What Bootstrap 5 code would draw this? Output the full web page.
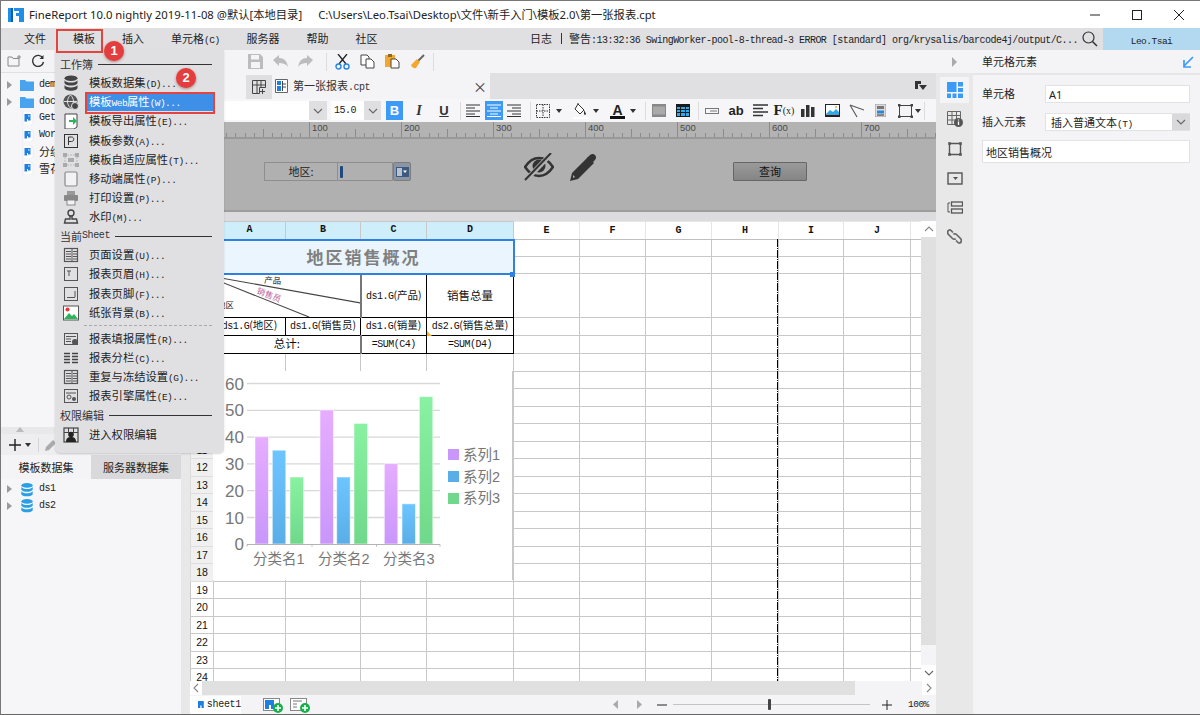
<!DOCTYPE html>
<html lang="zh-CN">
<head>
<meta charset="utf-8">
<title>FineReport</title>
<link href="https://cdn.jsdelivr.net/npm/bootstrap@5.3.0/dist/css/bootstrap.min.css" rel="stylesheet">
<style>
html,body{margin:0;height:715px;overflow:hidden;background:#f4f4f6}
body{font-family:"Noto Sans CJK SC","Noto Sans",sans-serif;font-size:11px;color:#222;line-height:1.2}
.asc{font-family:"Liberation Mono","Noto Sans CJK SC",monospace;font-size:9.5px;letter-spacing:-.5px}
.appwin{position:relative;width:1200px;height:715px;border-top:1px solid #777;border-left:1px solid #777;border-bottom:1px solid #666;background:#f4f4f6;overflow:hidden}
.titlebar{height:27px;background:#fff;flex:none}
.titlebar .apptitle{font-family:"Noto Sans","Noto Sans CJK SC",sans-serif;font-size:11.3px;color:#222;white-space:nowrap}
.logo{margin:0 5px 0 7px}
.winbtns{margin-left:auto}
.winbtn{width:42px;height:27px;display:flex;align-items:center;justify-content:center}
.menubar{height:22px;background:#e0e0e3;flex:none}
.menuitems{padding-left:9.5px}
.menuitem{padding:0 13.5px;font-size:11px;color:#222;white-space:nowrap;line-height:24px}
.logline{margin-left:auto;white-space:nowrap;line-height:24px;color:#222}
.logline .asc{font-size:10px;letter-spacing:-.53px}
.logsep{display:inline-block;width:1px;height:11px;background:#333;margin:0 7px 0 9px;vertical-align:-1px}
.usertag{width:97px;height:22px;background:#b3d9f0;margin-left:5px;text-align:center;line-height:22px}
.usertag .asc{font-size:9.5px}
.mainrow{flex:1 1 0;min-height:0}
.leftpane{width:180px;flex:none;background:#f6f6f8}
.tb-left{height:23px;border-bottom:1px solid #e0e0e3;flex:none;padding-left:6px;background:#f4f4f6}
.tb-left svg{margin-right:8px}
.treelist{padding-top:5px}
.treelist.filetree{flex:1 1 0;min-height:0;overflow:hidden;padding-top:4px}
.treelist.dstree{flex:none;height:235px;padding-top:2px}
.treerow{height:16.6px;white-space:nowrap;line-height:16.6px;padding-left:6px}
.treerow .arrow{width:0;height:0;border-left:5px solid #9a9a9a;border-top:4px solid transparent;border-bottom:4px solid transparent;margin-right:8px;flex:none}
.treerow .noarrow{width:15px;flex:none}
.treerow svg{flex:none;margin-right:5px}
.treerow .asc{font-size:10px}
.stripbar{height:7px;background:#e8e8ea;flex:none;position:relative}
.stripbar i{position:absolute;left:15px;top:0;border-left:4px solid transparent;border-right:4px solid transparent;border-bottom:5px solid #bbb}
.tb-add{height:21px;flex:none;background:#eeeef0;padding-left:8px}
.tb-add .vsep{height:14px;margin:0 6px 0 7px;background:#d4d4d6}
.dstabs{height:24px;flex:none}
.dstab{width:90px;text-align:center;line-height:24px;font-size:11px;background:#f4f4f6}
.dstab.off{background:#d9d9dc}
.midgap{width:9px;flex:none;background:#e8e8e8}
.centerpane{width:746px;flex:none;min-width:0}
.tb1{height:23px;flex:none;background:#f4f4f6;padding-left:53px}
.ic25{width:25px;height:23px;display:flex;align-items:center;justify-content:center;flex:none}
.vsep{width:1px;height:18px;background:#dcdcdf;flex:none}
.tabrow{height:26px;flex:none;background:#f4f4f6;padding-left:56px}
.plusbtn{width:26px;height:24px;background:#dfdfe2;display:flex;align-items:center;justify-content:center;flex:none;align-self:flex-end}
.sheetname{width:218px;display:flex;align-items:center;padding-left:3px;flex:none;background:#f4f4f6;white-space:nowrap}
.sheetname .nm{margin-left:5px;font-size:11px;color:#333}
.sheetname .asc{font-size:10px}
.sheetname .xx{margin-left:auto;margin-right:3px;font-size:14px;color:#444;line-height:1}
.tabfill{flex:1 1 0;background:#e0e0e3;display:flex;align-items:center;justify-content:flex-end;padding-right:9px}
.fmtbar{height:23px;flex:none;background:#f6f6f8}
.fmtbar .fx{height:19px;display:flex;align-items:center;justify-content:center;flex:none}
.fontbox{width:137px;background:#fff;justify-content:flex-end!important}
.chev{background:#dfdfe2;height:19px;display:flex;align-items:center;justify-content:center;flex:none}
.w18{width:18px}.w17{width:17px}.w16{width:16px}.w24{width:24px}.w6{width:7px}
.sizebox{width:33px;background:#fff;margin-left:4px;justify-content:flex-start!important;padding-left:3px}
.sizebox .asc{font-size:10px}
.fmtbtn-on{background:#3e9af7;color:#fff}
.boldb{font:700 13px "Liberation Sans",sans-serif}
.italici{font:italic 700 14px "Liberation Serif",serif;color:#333}
.underu{font:700 13px "Liberation Sans",sans-serif;text-decoration:underline;color:#333}
.abtxt{font:700 13px "Liberation Sans",sans-serif;color:#222}
.fxfont{font:700 15px "Liberation Serif",serif;color:#222}
.fxfont small{font-size:10px;font-weight:400}
.ml1{margin-left:1px}.ml3{margin-left:3px}.ml4{margin-left:4px}.ml5{margin-left:5px}.ml8{margin-left:8px}.ml9{margin-left:9px}.ml10{margin-left:10px}.ml11{margin-left:11px}
.caret{width:0;height:0;border-left:3.5px solid transparent;border-right:3.5px solid transparent;border-top:4px solid #333;display:block}
.rulerbar{height:17px;flex:none;background:#b3b3b3;padding-left:27px;border-bottom:2px solid #999;overflow:hidden}
.rulerseg{width:92px;flex:none;height:15px;position:relative;font-family:"Liberation Sans",sans-serif;font-size:9.5px;color:#4a4a4a;padding-left:3px;line-height:11px;background-image:linear-gradient(#8b8b8b,#8b8b8b),repeating-linear-gradient(90deg,#8b8b8b 0 1px,transparent 1px 9.2px),linear-gradient(#8b8b8b,#8b8b8b);background-size:1px 15px,100% 4px,1px 8px;background-position:0 0,0 100%,46px 100%;background-repeat:no-repeat}
.parampane{height:73px;flex:none;background:#b0b0b0;border-bottom:2px solid #9d9d9d;padding-left:74px;position:relative}
.pwidgets{height:19px;margin-top:23px}
.plabel{width:74px;height:19px;border:1px solid #8e8e8e;text-align:center;line-height:17px;font-size:11px;color:#222;flex:none}
.pinput{width:55px;height:19px;border:1px solid #8e8e8e;border-left:0;flex:none;padding:3px 0 0 2px}
.pinput i{display:block;width:3px;height:12px;background:#1f4a80;border-radius:1px}
.pdrop{width:18px;height:19px;border:1px solid #7d7d7d;border-radius:2px;background:#8b95a3;flex:none;display:flex;align-items:center;justify-content:center}
.pbtn.btn{width:74px;height:19px;padding:0;border:1px solid #666;border-radius:1px;background:linear-gradient(#9a9a9a,#858585);color:#111;font-size:11px;line-height:17px;margin-left:135px;flex:none}
.p-eye{margin-left:113px;margin-top:-9px;flex:none}
.p-pen{margin-left:16px;margin-top:-9px;flex:none}
.graygap{height:9px;flex:none;background:#dcdcde}
.gridrow{height:460px;flex:none}
.gridclip{width:731px;height:460px;overflow:hidden;position:relative;flex:none;background:#fff}
.sheet-grid.table{table-layout:fixed;width:731px;margin:0;border-collapse:collapse;--bs-table-bg:#fff;--bs-border-color:#c8c8c8;font-family:"Liberation Mono","Noto Sans CJK SC",monospace}
.sheet-grid.table>:not(caption)>*>*{padding:0;border:1px solid #c8c8c8;text-align:center;vertical-align:middle;font-size:10.5px;color:#111;line-height:1;font-weight:400;overflow:hidden;white-space:nowrap;background:#fff;box-shadow:none}
.sheet-grid tr{height:17.5px}
.sheet-grid tr.rh18{height:18px}
.sheet-grid tr.rh17{height:17px}
.sheet-grid tr.rh44{height:43px}
.sheet-grid.table>:not(caption)>*>th{font-size:10px;font-weight:700}
.sheet-grid.table>:not(caption)>*>th.rn{font-weight:400;font-family:"Liberation Sans",sans-serif;font-size:10.5px}
.sheet-grid.table>:not(caption)>*>th.sel{background:#cdeefa;border-bottom-color:#2f80e0}
.sheet-grid.table>:not(caption)>*>th.rnbg{background:#f0f0f0;border-color:#ddd}
.sheet-grid.table>:not(caption)>*>th.hd{border-color:#e6e6e6;border-bottom-color:#c0c0c0}
.sheet-grid.table>:not(caption)>*>td.blk{border-color:#000}
.sheet-grid.table>:not(caption)>*>td.blkl{border-left:2px solid #777}
.sheet-grid.table>:not(caption)>*>td.ttl{border:2px solid #2f80e0;background:#eaf5fd;color:#808080;font-family:"Noto Sans CJK SC",sans-serif;font-weight:700;font-size:17px;letter-spacing:2px;position:relative}
.sheet-grid.table>:not(caption)>*>td.big{font-family:"Noto Sans CJK SC",sans-serif;font-size:11.5px}
.cn11{font-size:10.5px;font-family:"Noto Sans CJK SC",sans-serif}
.sheet-grid .asc{font-size:10px}
.diagsvg{display:block;width:147px;height:42px}
.handle{position:absolute;left:320px;top:51px;width:5px;height:5px;background:#2f80e0}
.yellowtri{position:absolute;left:237px;top:110px;width:0;height:0;border-left:5px solid #f0b030;border-top:5px solid transparent}
.pagebreak{position:absolute;left:587px;top:18px;bottom:0;width:1px;background:repeating-linear-gradient(#000 0 8px,transparent 8px 9px,#000 9px 10px,transparent 10px 11px)}
.chartbox{position:absolute;left:23px;top:150px;width:300px;height:209px;background:#fff;border-right:1px solid #c8c8c8}
.chartbox svg{display:block}
.chartbox text{font-family:"Liberation Sans","Noto Sans CJK SC",sans-serif;fill:#777}
.vscroll{width:15px;flex:none;background:#f4f4f6}
.vs-arrow{height:16px;background:#fff;display:flex;align-items:center;justify-content:center;flex:none}
.vs-thumb{height:408px;background:#e0e0e0;flex:none}
.hscroll{height:14px;flex:none;background:#f4f4f6}
.hs-left{width:12px;background:#fff;display:flex;align-items:center;justify-content:center;flex:none}
.hs-thumb{width:653px;background:#e0e0e0;flex:none}
.hs-right{width:14px;background:#fff;display:flex;align-items:center;justify-content:center;margin-left:auto;flex:none}
.statusbar{flex:1 1 0;background:#f4f4f6;min-height:0}
.sheettab{width:51px;height:18px;background:#fff;padding-left:8px;flex:none}
.sheettab .asc{font-size:10px;margin-left:3px;letter-spacing:-.3px}
.sb-ic{flex:none}
.statusic1{margin-left:22px}
.statusic2{margin-left:7px}
.sb-arrows{margin-left:303px;flex:none}
.sb-arrow2{margin-left:17px}
.sb-minus{margin-left:15px;flex:none}
.slider-line{width:197px;height:1px;background:#c4c4c4;position:relative;flex:none;margin-left:6px}
.slider-knob{position:absolute;left:95px;top:-5px;width:3px;height:11px;background:#444;border-radius:1px}
.sb-plus{margin-left:12px;flex:none}
.zoompct{font-size:9.5px;margin-left:16px;color:#222}
.railpane{width:37px;flex:none;background:#e8e8e8}
.railtop{height:23px;background:#f4f4f6;display:flex;align-items:center;justify-content:center;flex:none}
.railtop i{width:0;height:0;border-left:5px solid #aaa;border-top:5px solid transparent;border-bottom:5px solid transparent}
.railic{width:29px;height:26px;margin-left:4px;margin-top:3px;display:flex;align-items:center;justify-content:center;flex:none}
.railic.on{background:#f4f4f6;margin-top:4px}
.railic+.railic{margin-top:3.4px}
.proppane{flex:1 1 0;background:#f4f4f6;min-width:0}
.prophead{height:25px;border-bottom:2px solid #e6e6e8;padding:0 6px 0 9px;font-size:11px;flex:none}
.propform{padding:10px 10px 0 9px}
.proprow{height:18px;margin-bottom:9.5px}
.proprow label{width:63px;flex:none;font-size:11px;color:#222}
.propform .form-control{height:18px;min-height:18px;min-width:0;padding:0 3px;font-size:11px;border:1px solid #e2e2e4;border-radius:0;background:#fff;color:#222;font-family:"Noto Sans",sans-serif;line-height:16px;flex:1 1 0;width:auto}
.selectbox{flex:1 1 0;height:18px;background:#fff;display:flex;align-items:stretch;border:1px solid #e2e2e4;border-width:1px 0 1px 1px;min-width:0}
.selectbox .val{flex:1 1 0;padding-left:5px;line-height:16px;white-space:nowrap}
.selectbox .val .asc{font-size:9.5px}
.selectbox .chev{height:auto;width:18px;background:#d9d9dc}
.propform .txtfield{height:23px;margin-top:0;width:208px;flex:none;padding:0 3px;font-family:"Noto Sans CJK SC",sans-serif;line-height:21px}
/* dropdown */
.dropdown-menu.tpl-menu{position:absolute;display:block;left:54px;top:49px;width:169px;height:403px;margin:0;padding:4.5px 0 0;background:#e0e0e3;border:0;border-radius:0 0 5px 5px;box-shadow:0 1px 2px rgba(0,0,0,.15);font-size:11.3px;min-width:0;color:#222;z-index:10}
.tpl-menu .dropdown-header{height:19.14px;padding:0 12px 0 5px;font-size:11px;color:#333;display:flex;align-items:center;line-height:1}
.tpl-menu .dropdown-header .rule{flex:1 1 0;border-top:1px solid #333;margin-left:5px}
.tpl-menu .dropdown-header .asc{font-size:10px;letter-spacing:-.4px}
.tpl-menu .dropdown-divider{height:7.2px;margin:0 12px 0 29px;border:0;background:none;position:relative;opacity:1}
.tpl-menu .dropdown-divider::after{content:"";position:absolute;left:0;right:0;top:3px;border-top:1px dashed #aaa}
.tpl-menu .dropdown-item{height:19.14px;padding:0;display:flex;align-items:center;background:none;color:#222;font-size:11.3px;white-space:nowrap}
.tpl-menu .dropdown-item svg{margin-left:8px;margin-right:7px;flex:none}
.mi-lab{flex:1 1 0;margin-right:11px;height:18px;line-height:17px;padding-left:3px;display:block}
.mi-lab .asc{font-size:9.5px;letter-spacing:-.55px}
.tpl-menu .dropdown-item.active .mi-lab{background:#3d8fe8;color:#fff}
/* annotations */
.markbox{position:absolute;border:2px solid #e4443f;z-index:11}
.mb1{left:55px;top:28px;width:47px;height:24px}
.mb2{left:84px;top:91px;width:130px;height:22px}
.markdot{position:absolute;width:20px;height:20px;border-radius:50%;background:#e33d3d;color:#fff;text-align:center;line-height:20px;font-family:"Liberation Sans",sans-serif;font-size:13px;font-weight:700;z-index:12;box-shadow:0 1px 3px rgba(120,0,0,.45)}
.md1{left:103px;top:40px}
.md2{left:175px;top:67px}
</style>
</head>
<body>
<svg width="0" height="0" class="position-absolute">
  <defs>
    <symbol id="s-db" viewBox="0 0 16 16"><ellipse cx="8" cy="3.3" rx="6.5" ry="2.8"/><path d="M1.5 5.2c.8 1.5 3.5 2.3 6.500 2.300s5.700-.8 6.500-2.300v3.100c-.8 1.500-3.500 2.300-6.500 2.300s-5.700-.8-6.500-2.300z"/><path d="M1.500 10.100c.8 1.500 3.500 2.300 6.500 2.300s5.700-.8 6.500-2.300v3c0 1.500-3 2.700-6.500 2.700s-6.500-1.200-6.500-2.700z"/></symbol>
    <symbol id="s-file" viewBox="0 0 12 14"><path d="M1 0h7l3 3v9l-2 2H1z" fill="#fff" stroke="#e4e4e6" stroke-width=".6"/><path d="M2.500 3h6v6.500H6V8H5v2.500H2.500z" fill="#1f7fe0"/><rect x="6.200" y="4.300" width="1.300" height="1.300" fill="#fff"/></symbol>
    <symbol id="s-chev" viewBox="0 0 10 6"><path d="M1 1l4 4 4-4" fill="none" stroke="#666" stroke-width="1.100"/></symbol>
    <symbol id="s-page" viewBox="0 0 16 16"><rect x="1.500" y="1.500" width="13" height="13" fill="none" stroke="#555" stroke-width="1.200"/><path d="M9 2v12M10 4.500h4M10 7h4M10 9.500h4M10 12h4M3 4.500h5M3 7h5M3 9.500h5M3 12h5" stroke="#555" fill="none"/></symbol>
    <symbol id="s-plusg" viewBox="0 0 10 10"><circle cx="5" cy="5" r="5" fill="#16b04a"/><path d="M5 2v6M2 5h6" stroke="#fff" stroke-width="1.600"/></symbol>
  </defs>
</svg>
<div class="appwin d-flex flex-column">
  <header class="titlebar d-flex align-items-center">
    <svg class="logo" width="16" height="16" viewBox="0 0 16 16"><path d="M0 1h5v14H0z" fill="#1f8ee8"/><path d="M6 1h10v14h-5V9H8V6h3V4H6z" fill="#1f8ee8"/><path d="M3 1h2v14H3z" fill="#0f5fa8"/></svg>
    <span class="apptitle">FineReport 10.0 nightly 2019-11-08 @默认[本地目录]</span>
    <span class="apptitle ms-3">C:\Users\Leo.Tsai\Desktop\文件\新手入门\模板2.0\第一张报表.cpt</span>
    <div class="winbtns d-flex">
      <div class="winbtn"><svg width="12" height="12" viewBox="0 0 12 12"><path d="M1 6h10" stroke="#222" fill="none"/></svg></div>
      <div class="winbtn"><svg width="12" height="12" viewBox="0 0 12 12"><rect x="1.500" y="1.500" width="9" height="9" stroke="#222" fill="none"/></svg></div>
      <div class="winbtn"><svg width="12" height="12" viewBox="0 0 12 12"><path d="M1 1l10 10M11 1L1 11" stroke="#222" fill="none"/></svg></div>
    </div>
  </header>
  <nav class="menubar d-flex align-items-center">
    <div class="menuitems d-flex">
      <span class="menuitem">文件</span><span class="menuitem">模板</span><span class="menuitem">插入</span><span class="menuitem">单元格<span class="asc">(C)</span></span><span class="menuitem">服务器</span><span class="menuitem">帮助</span><span class="menuitem">社区</span>
    </div>
    <div class="logline">日志<span class="logsep"></span>警告<span class="asc">:13:32:36 SwingWorker-pool-8-thread-3 ERROR [standard] org/krysalis/barcode4j/output/C...</span></div>
    <svg class="ms-1" width="16" height="16" viewBox="0 0 16 16"><circle cx="6.500" cy="6.500" r="5.500" fill="none" stroke="#333" stroke-width="1.200"/><path d="M10.500 10.500l4.500 4.500" stroke="#333" stroke-width="1.500"/></svg>
    <div class="usertag"><span class="asc">Leo.Tsai</span></div>
  </nav>
  <div class="mainrow d-flex">
    <aside class="leftpane d-flex flex-column">
      <div class="tb-left d-flex align-items-center">
        <svg width="16" height="14" viewBox="0 0 16 14"><path d="M1 3h4l1 1.500h6V12H1z" fill="none" stroke="#888"/><path d="M12 1v4M10 3h4" stroke="#888" fill="none"/></svg>
        <svg width="14" height="14" viewBox="0 0 14 14"><path d="M11.800 4A5.500 5.500 0 1 0 12.500 8" fill="none" stroke="#333" stroke-width="1.400"/><path d="M12.500 1v4h-4z" fill="#333"/></svg>
      </div>
      <div class="treelist filetree">
        <div class="treerow d-flex align-items-center"><span class="arrow"></span><svg width="14" height="12" viewBox="0 0 14 12"><path d="M0 1h5l1.500 1.500H14V12H0z" fill="#4aa3ef"/></svg><span class="asc">demo</span></div>
        <div class="treerow d-flex align-items-center"><span class="arrow"></span><svg width="14" height="12" viewBox="0 0 14 12"><path d="M0 1h5l1.500 1.500H14V12H0z" fill="#4aa3ef"/></svg><span class="asc">doc</span></div>
        <div class="treerow d-flex align-items-center"><span class="noarrow"></span><svg width="12" height="14"><use href="#s-file"/></svg><span class="asc">GettingStarted</span></div>
        <div class="treerow d-flex align-items-center"><span class="noarrow"></span><svg width="12" height="14"><use href="#s-file"/></svg><span class="asc">WorkBook1</span></div>
        <div class="treerow d-flex align-items-center"><span class="noarrow"></span><svg width="12" height="14"><use href="#s-file"/></svg><span>分组报表</span></div>
        <div class="treerow d-flex align-items-center"><span class="noarrow"></span><svg width="12" height="14"><use href="#s-file"/></svg><span>雪花图表</span></div>
      </div>
      <div class="stripbar"><i></i></div>
      <div class="tb-add d-flex align-items-center">
        <svg width="12" height="12" viewBox="0 0 12 12"><path d="M6 0v12M0 6h12" stroke="#222" stroke-width="1.400" fill="none"/></svg>
        <span class="caret ms-1"></span>
        <span class="vsep"></span>
        <svg width="12" height="12" viewBox="0 0 12 12"><path d="M0 12l1-4 7-7 3 3-7 7z" fill="#aaa"/></svg>
      </div>
      <div class="dstabs d-flex"><div class="dstab">模板数据集</div><div class="dstab off">服务器数据集</div></div>
      <div class="treelist dstree">
        <div class="treerow d-flex align-items-center"><span class="arrow"></span><svg width="14" height="15" fill="#2a9fe3"><use href="#s-db"/></svg><span class="asc">ds1</span></div>
        <div class="treerow d-flex align-items-center"><span class="arrow"></span><svg width="14" height="15" fill="#2a9fe3"><use href="#s-db"/></svg><span class="asc">ds2</span></div>
      </div>
    </aside>
    <div class="midgap"></div>
    <main class="centerpane d-flex flex-column">
      <div class="tb1 d-flex align-items-center">
        <div class="ic25"><svg width="15" height="15" viewBox="0 0 15 15"><path d="M0 0h12l3 3v12H0z" fill="#bcbcbc"/><rect x="3" y="1" width="8" height="4.500" fill="#f4f4f6"/><rect x="3" y="8" width="9" height="6" fill="#f4f4f6"/></svg></div>
        <div class="ic25"><svg width="15" height="13" viewBox="0 0 15 13"><path d="M0 5l6-5v3c5 0 8 3 9 9-2-3-5-4-9-4v3z" fill="#bcbcbc"/></svg></div>
        <div class="ic25"><svg width="15" height="13" viewBox="0 0 15 13"><path d="M15 5L9 0v3C4 3 1 6 0 12c2-3 5-4 9-4v3z" fill="#bcbcbc"/></svg></div>
        <div class="vsep ms-2"></div>
        <div class="ic25 ml3"><svg width="15" height="16" viewBox="0 0 15 16"><path d="M3 0l8 10M12 0L4 10" stroke="#222" stroke-width="1.300" fill="none"/><circle cx="3.500" cy="12.500" r="2.500" fill="none" stroke="#2a86e0" stroke-width="1.400"/><circle cx="11.500" cy="12.500" r="2.500" fill="none" stroke="#2a86e0" stroke-width="1.400"/></svg></div>
        <div class="ic25"><svg width="15" height="15" viewBox="0 0 15 15"><path d="M1 1h6l2 2v8H1z" fill="#fff" stroke="#444"/><path d="M6 5h5l3 3v6H6z" fill="#fff" stroke="#444"/></svg></div>
        <div class="ic25"><svg width="15" height="15" viewBox="0 0 15 15"><rect x="0" y="1" width="10" height="12" fill="#f2a72e"/><rect x="3" y="0" width="4" height="3" fill="#8a6a2a"/><path d="M6 5h5l3 3v6H6z" fill="#fff" stroke="#444"/></svg></div>
        <div class="ic25"><svg width="15" height="15" viewBox="0 0 15 15"><path d="M8 7l6-6" stroke="#666" stroke-width="2"/><path d="M1 11l6-6 3 3-4 6c-2 1-4-1-5-3z" fill="#f2a72e"/></svg></div>
        <div class="vsep ml3"></div>
      </div>
      <div class="tabrow d-flex">
        <div class="plusbtn"><svg width="14" height="14" viewBox="0 0 14 14"><path d="M.5.500h13v7h-6v6H.5zM.5 5h13M5 .5v13M9 .5V7M10.500 9v5M8 11.500h5" fill="none" stroke="#444"/></svg></div>
        <div class="sheetname"><svg width="13" height="14" viewBox="0 0 13 14"><path d="M.5.500h12v13H.5z" fill="#fff" stroke="#666"/><path d="M2 2h4v4H2z M2 7h4v5H2z" fill="#1f7fe0"/><path d="M7.500 2v10M7.500 5H11M7.500 8H11" stroke="#444" fill="none"/></svg><span class="nm">第一张报表<span class="asc">.cpt</span></span><span class="xx">×</span></div>
        <div class="tabfill"><svg width="12" height="10" viewBox="0 0 12 10"><path d="M0 0h6v3H3v5H0z" fill="#333"/><path d="M4 4h8L8 9z" fill="#333"/></svg></div>
      </div>
      <div class="fmtbar d-flex align-items-center">
        <div class="fx fontbox"><div class="chev w18"><svg width="10" height="6"><use href="#s-chev"/></svg></div></div>
        <div class="fx sizebox"><span class="asc">15.0</span></div><div class="chev w17"><svg width="10" height="6"><use href="#s-chev"/></svg></div>
        <div class="fx w17 ml5 fmtbtn-on"><b class="boldb">B</b></div>
        <div class="fx w24 ml4"><i class="italici">I</i></div>
        <div class="fx w24 ml1"><span class="underu">U</span></div>
        <div class="vsep ml4"></div>
        <div class="fx w16 ml4"><svg width="14" height="13" viewBox="0 0 14 13"><path d="M0 1h14M0 4h9M0 7h14M0 10h9M0 12.500h14" stroke="#333" fill="none"/></svg></div>
        <div class="fx w18 ml4 fmtbtn-on"><svg width="14" height="13" viewBox="0 0 14 13"><path d="M0 1h14M3 4h8M0 7h14M3 10h8M0 12.500h14" stroke="#fff" fill="none"/></svg></div>
        <div class="fx w16 ml3"><svg width="14" height="13" viewBox="0 0 14 13"><path d="M0 1h14M5 4h9M0 7h14M5 10h9M0 12.500h14" stroke="#333" fill="none"/></svg></div>
        <div class="vsep ml8"></div>
        <div class="fx w16 ml4"><svg width="14" height="14" viewBox="0 0 14 14"><path d="M.5.500h13v13H.5zM7 .5v13M.5 7h13" fill="none" stroke="#333" stroke-dasharray="1.500 1"/></svg></div>
        <div class="fx w6 ml4"><span class="caret"></span></div>
        <div class="fx w16 ml10"><svg width="15" height="16" viewBox="0 0 15 16"><path d="M5 1l6 6-4 4-5-5zM5 1V0" fill="#fff" stroke="#333"/><path d="M11 7c1 2 2 3 2 4s-2 1-2 0" fill="#333"/><rect y="14" width="15" height="2" fill="#fff"/></svg></div>
        <div class="fx w6 ml4"><span class="caret"></span></div>
        <div class="fx w16 ml10"><svg width="15" height="16" viewBox="0 0 15 16"><rect y="13" width="15" height="3" fill="#111"/><text x="7.500" y="11.500" text-anchor="middle" font-family="Liberation Sans" font-weight="700" font-size="14" fill="#222">A</text></svg></div>
        <div class="fx w6 ml4"><span class="caret"></span></div>
        <div class="vsep ml9"></div>
        <div class="fx w24 ml1"><svg width="14" height="13" viewBox="0 0 14 13"><rect width="14" height="13" fill="#888"/><rect x="1" y="2.500" width="12" height="8" fill="#aaa"/></svg></div>
        <div class="fx w24"><svg width="14" height="13" viewBox="0 0 14 13"><rect width="14" height="13" fill="#1a1a1a"/><path d="M1 3h3v2H1zM5 3h4v2H5zM10 3h3v2h-3zM1 6h3v2H1zM5 6h4v2H5zM10 6h3v2h-3zM1 9h3v3H1zM5 9h4v3H5zM10 9h3v3h-3z" fill="#2fa9ee"/></svg></div>
        <div class="vsep ml3"></div>
        <div class="fx w24 ml1"><svg width="14" height="6" viewBox="0 0 14 6"><rect x=".5" y=".5" width="13" height="5" fill="none" stroke="#777"/><path d="M5 3h7" stroke="#777"/></svg></div>
        <div class="fx w24 abtxt">ab</div>
        <div class="fx w24"><svg width="15" height="13" viewBox="0 0 15 13"><path d="M0 1h15M0 4.500h10M0 8h15M0 11.500h10" stroke="#333" stroke-width="1.400" fill="none"/></svg></div>
        <div class="fx w24 fxfont">F<small>(x)</small></div>
        <div class="fx w24"><svg width="14" height="13" viewBox="0 0 14 13"><rect y="5" width="3.500" height="8" fill="#333"/><rect x="5" y="1" width="3.500" height="12" fill="#333"/><rect x="10" y="3" width="3.500" height="10" fill="#333"/></svg></div>
        <div class="fx w24"><svg width="15" height="13" viewBox="0 0 15 13"><rect width="15" height="13" fill="#222"/><rect x="1" y="1" width="13" height="9.500" fill="#fff"/><path d="M1 10l4-4 3 2 3-3 3 3v2.500H1z" fill="#2fa9ee"/><circle cx="11" cy="3" r="1" fill="#f2a72e"/></svg></div>
        <div class="fx w24"><svg width="15" height="14" viewBox="0 0 15 14"><path d="M1 1l14 5M1 1l7 12" fill="none" stroke="#555" stroke-width="1.100"/></svg></div>
        <div class="fx w24"><svg width="11" height="13" viewBox="0 0 11 13"><rect width="11" height="13" fill="#ddd" stroke="#999"/><rect x="2" y="2" width="7" height="3" fill="#777"/><rect x="2" y="6.500" width="7" height="3" fill="#2a86e0"/><rect x="2" y="10.500" width="7" height="1" fill="#333"/></svg></div>
        <div class="fx w16 ml5"><svg width="15" height="14" viewBox="0 0 15 14"><rect x="1.500" y="1.500" width="12" height="11" fill="#f4f4f6" stroke="#444"/><path d="M0 0h2.500v2.500H0zM12.500 0H15v2.500h-2.500zM0 11.500h2.500V14H0zM12.500 11.500H15V14h-2.500z" fill="#444"/></svg></div>
        <div class="fx w6 ml1"><span class="caret"></span></div>
        <div class="vsep ml3"></div>
      </div>
      <div class="rulerbar d-flex">
        <div class="rulerseg"></div><div class="rulerseg">100</div><div class="rulerseg">200</div><div class="rulerseg">300</div><div class="rulerseg">400</div><div class="rulerseg">500</div><div class="rulerseg">600</div><div class="rulerseg">700</div><div class="rulerseg"></div>
      </div>
      <section class="parampane">
        <div class="pwidgets d-flex align-items-center">
          <div class="plabel">地区:</div>
          <div class="pinput"><i></i></div>
          <div class="pdrop"><svg width="13" height="10" viewBox="0 0 13 10"><rect x=".5" y=".5" width="12" height="9" fill="#b8c2d0" stroke="#3d5a80"/><rect x="6" y="1" width="6" height="8" fill="#3d5a80"/><path d="M7 3.500h4L9 6z" fill="#fff"/></svg></div>
          <svg class="p-eye" width="30" height="28" viewBox="0 0 30 28"><path d="M1 14c4-6 9-9 14-9s10 3 14 9c-4 6-9 9-14 9S5 20 1 14z" fill="none" stroke="#333" stroke-width="2.600"/><circle cx="15" cy="13" r="6.500" fill="#333"/><path d="M2 27L27 1" stroke="#b0b0b0" stroke-width="5"/><path d="M1 27L27 0" stroke="#333" stroke-width="2"/></svg>
          <svg class="p-pen" width="28" height="28" viewBox="0 0 28 28"><path d="M0 28l2-8L18 4l6 6L8 26z" fill="#333"/><path d="M19.500 2.500c2-2 4-2 5.500-.5s1.500 3.500-.5 5.500L22 10l-5-5z" fill="#333"/><path d="M3 22l2 2-2 1z" fill="#b0b0b0"/></svg>
          <button type="button" class="btn pbtn">查询</button>
        </div>
      </section>
      <div class="graygap"></div>
      <div class="gridrow d-flex">
        <div class="gridclip">
          <table class="table table-bordered sheet-grid">
            <colgroup><col width="23"><col width="72"><col width="75"><col width="66"><col width="87"><col width="66"><col width="66"><col width="66"><col width="67"><col width="65"><col width="67"><col width="11"></colgroup>
            <tbody>
            <tr class="rh18"><th class="rn"></th><th class="sel">A</th><th class="sel">B</th><th class="sel">C</th><th class="sel">D</th><th class="hd">E</th><th class="hd">F</th><th class="hd">G</th><th class="hd">H</th><th class="hd">I</th><th class="hd">J</th><th class="hd"></th></tr>
            <tr class="rh17"><th class="rn rnbg">1</th><td class="ttl" colspan="4" rowspan="2">地区销售概况</td><td></td><td></td><td></td><td></td><td></td><td></td><td></td></tr>
            <tr class="rh17"><th class="rn rnbg">2</th><td></td><td></td><td></td><td></td><td></td><td></td><td></td></tr>
            <tr class="rh44"><th class="rn rnbg">3</th>
              <td colspan="2" class="blk"><svg class="diagsvg" viewBox="0 0 147 42"><path d="M-10 0L147 28M-10 0L95 42" stroke="#444" stroke-width="1.100" fill="none"/><text x="50" y="8" font-size="8.500" fill="#222" transform="rotate(4 50 8)">产品</text><text x="42" y="18" font-size="8.500" fill="#c06a9a" transform="rotate(22 42 18)">销售员</text><text x="3" y="33" font-size="8.500" fill="#222">地区</text></svg></td>
              <td class="blk blkl"><span class="asc">ds1.G</span><span class="cn11">(产品)</span></td>
              <td class="blk big">销售总量</td><td></td><td></td><td></td><td></td><td></td><td></td><td></td></tr>
            <tr class="rh18"><th class="rn rnbg">4</th><td class="blk"><span class="asc">ds1.G</span><span class="cn11">(地区)</span></td><td class="blk"><span class="asc">ds1.G</span><span class="cn11">(销售员)</span></td><td class="blk"><span class="asc">ds1.G</span><span class="cn11">(销量)</span></td><td class="blk"><span class="asc">ds2.G</span><span class="cn11">(销售总量)</span></td><td></td><td></td><td></td><td></td><td></td><td></td><td></td></tr>
            <tr class="rh18"><th class="rn rnbg">5</th><td class="blk big" colspan="2">总计:</td><td class="blk blkl"><span class="asc">=SUM(C4)</span></td><td class="blk"><span class="asc">=SUM(D4)</span></td><td></td><td></td><td></td><td></td><td></td><td></td><td></td></tr>
            <tr class="rh18"><th class="rn rnbg">6</th><td></td><td></td><td></td><td></td><td></td><td></td><td></td><td></td><td></td><td></td><td></td></tr>
            <tr><th class="rn rnbg">7</th><td></td><td></td><td></td><td></td><td></td><td></td><td></td><td></td><td></td><td></td><td></td></tr>
            <tr><th class="rn rnbg">8</th><td></td><td></td><td></td><td></td><td></td><td></td><td></td><td></td><td></td><td></td><td></td></tr>
            <tr><th class="rn rnbg">9</th><td></td><td></td><td></td><td></td><td></td><td></td><td></td><td></td><td></td><td></td><td></td></tr>
            <tr><th class="rn rnbg">10</th><td></td><td></td><td></td><td></td><td></td><td></td><td></td><td></td><td></td><td></td><td></td></tr>
            <tr><th class="rn rnbg">11</th><td></td><td></td><td></td><td></td><td></td><td></td><td></td><td></td><td></td><td></td><td></td></tr>
            <tr><th class="rn rnbg">12</th><td></td><td></td><td></td><td></td><td></td><td></td><td></td><td></td><td></td><td></td><td></td></tr>
            <tr><th class="rn rnbg">13</th><td></td><td></td><td></td><td></td><td></td><td></td><td></td><td></td><td></td><td></td><td></td></tr>
            <tr><th class="rn rnbg">14</th><td></td><td></td><td></td><td></td><td></td><td></td><td></td><td></td><td></td><td></td><td></td></tr>
            <tr><th class="rn rnbg">15</th><td></td><td></td><td></td><td></td><td></td><td></td><td></td><td></td><td></td><td></td><td></td></tr>
            <tr><th class="rn rnbg">16</th><td></td><td></td><td></td><td></td><td></td><td></td><td></td><td></td><td></td><td></td><td></td></tr>
            <tr><th class="rn rnbg">17</th><td></td><td></td><td></td><td></td><td></td><td></td><td></td><td></td><td></td><td></td><td></td></tr>
            <tr><th class="rn rnbg">18</th><td></td><td></td><td></td><td></td><td></td><td></td><td></td><td></td><td></td><td></td><td></td></tr>
            <tr><th class="rn">19</th><td></td><td></td><td></td><td></td><td></td><td></td><td></td><td></td><td></td><td></td><td></td></tr>
            <tr><th class="rn">20</th><td></td><td></td><td></td><td></td><td></td><td></td><td></td><td></td><td></td><td></td><td></td></tr>
            <tr><th class="rn">21</th><td></td><td></td><td></td><td></td><td></td><td></td><td></td><td></td><td></td><td></td><td></td></tr>
            <tr><th class="rn">22</th><td></td><td></td><td></td><td></td><td></td><td></td><td></td><td></td><td></td><td></td><td></td></tr>
            <tr><th class="rn">23</th><td></td><td></td><td></td><td></td><td></td><td></td><td></td><td></td><td></td><td></td><td></td></tr>
            <tr><th class="rn">24</th><td></td><td></td><td></td><td></td><td></td><td></td><td></td><td></td><td></td><td></td><td></td></tr>
            </tbody>
          </table>
          <div class="handle"></div>
          <div class="yellowtri"></div>
          <div class="pagebreak"></div>
          <div class="chartbox">
            <svg width="299" height="209" viewBox="213 371 299 209">
              <defs>
                <linearGradient id="gp" x1="0" y1="0" x2="0" y2="1"><stop offset="0" stop-color="#e6adff"/><stop offset="1" stop-color="#c996fa"/></linearGradient>
                <linearGradient id="gb" x1="0" y1="0" x2="0" y2="1"><stop offset="0" stop-color="#6dc5ff"/><stop offset="1" stop-color="#5aaee8"/></linearGradient>
                <linearGradient id="gg" x1="0" y1="0" x2="0" y2="1"><stop offset="0" stop-color="#88f2a2"/><stop offset="1" stop-color="#70d88a"/></linearGradient>
              </defs>
              <path d="M247 383.500H440M247 410.300H440M247 437.100H440M247 463.900H440M247 490.700H440M247 517.500H440" stroke="#d8d8d8" stroke-width="1.300" fill="none"/>
              <g font-size="17" text-anchor="end">
                <text x="244" y="389.500">60</text><text x="244" y="416.300">50</text><text x="244" y="443">40</text><text x="244" y="470">30</text><text x="244" y="496.700">20</text><text x="244" y="523.500">10</text><text x="244" y="550.300">0</text>
              </g>
              <g stroke-width="1" stroke-opacity=".55" stroke="#fff">
                <rect x="255" y="436.800" width="13.500" height="107.200" fill="url(#gp)"/><rect x="272.300" y="450.200" width="13.500" height="93.800" fill="url(#gb)"/><rect x="290" y="477" width="13.500" height="67" fill="url(#gg)"/>
                <rect x="320" y="410" width="13.500" height="134" fill="url(#gp)"/><rect x="336.700" y="477" width="13.500" height="67" fill="url(#gb)"/><rect x="354" y="423.400" width="13.500" height="120.600" fill="url(#gg)"/>
                <rect x="384.300" y="463.600" width="13.500" height="80.400" fill="url(#gp)"/><rect x="402" y="503.800" width="13.500" height="40.200" fill="url(#gb)"/><rect x="419.300" y="396.600" width="13.500" height="147.400" fill="url(#gg)"/>
              </g>
              <path d="M247 544.500H440M247 544.500v2M312 544.500v2M376.500 544.500v2M440 544.500v2" stroke="#b4b4b4" fill="none"/>
              <g font-size="14.500">
                <text x="253" y="563.500">分类名1</text><text x="318" y="563.500">分类名2</text><text x="383" y="563.500">分类名3</text>
                <text x="463" y="460">系列1</text><text x="463" y="481.500">系列2</text><text x="463" y="503">系列3</text>
              </g>
              <rect x="448" y="449" width="11" height="11" fill="#c996fa"/><rect x="448" y="471" width="11" height="11" fill="#5aaee8"/><rect x="448" y="493" width="11" height="11" fill="#70d88a"/>
            </svg>
          </div>
        </div>
        <div class="vscroll d-flex flex-column">
          <div class="vs-arrow"><svg width="10" height="6" viewBox="0 0 10 6"><path d="M1 5l4-4 4 4" fill="none" stroke="#888" stroke-width="1.100"/></svg></div>
          <div class="vs-thumb"></div>
          <div class="flex-grow-1"></div>
          <div class="vs-arrow"><svg width="10" height="6"><use href="#s-chev"/></svg></div>
        </div>
      </div>
      <div class="hscroll d-flex">
        <div class="hs-left"><svg width="6" height="10" viewBox="0 0 6 10"><path d="M5 1L1 5l4 4" fill="none" stroke="#888" stroke-width="1.100"/></svg></div>
        <div class="hs-thumb"></div>
        <div class="hs-right"><svg width="6" height="10" viewBox="0 0 6 10"><path d="M1 1l4 4-4 4" fill="none" stroke="#888" stroke-width="1.100"/></svg></div>
      </div>
      <div class="statusbar d-flex align-items-center">
        <div class="sheettab d-flex align-items-center"><svg width="9" height="11" viewBox="0 0 9 11"><path d="M0 0h9v11H5.500V7h-2v4H0z" fill="#1f7fe0"/></svg><span class="asc">sheet1</span></div>
        <svg class="sb-ic statusic1" width="20" height="16" viewBox="0 0 20 16"><rect x=".5" y="1.500" width="16" height="12" fill="#fff" stroke="#888"/><path d="M2 3h9v9H8V8H6v4H2z" fill="#1f7fe0"/><use href="#s-plusg" x="10" y="6" width="10" height="10"/></svg>
        <svg class="sb-ic statusic2" width="20" height="16" viewBox="0 0 20 16"><rect x=".5" y="1.500" width="16" height="12" fill="#fff" stroke="#888"/><path d="M3 4h9M3 7h4M3 10h4" stroke="#777" fill="none"/><use href="#s-plusg" x="10" y="6" width="10" height="10"/></svg>
        <div class="sb-arrows d-flex">
          <svg width="6" height="9" viewBox="0 0 6 9"><path d="M5 0v9L0 4.500z" fill="#aaa"/></svg>
          <svg class="sb-arrow2" width="6" height="9" viewBox="0 0 6 9"><path d="M1 0v9l5-4.500z" fill="#aaa"/></svg>
        </div>
        <svg class="sb-minus" width="10" height="10" viewBox="0 0 10 10"><path d="M0 5h10" stroke="#222" fill="none"/></svg>
        <div class="slider-line"><span class="slider-knob"></span></div>
        <svg class="sb-plus" width="10" height="10" viewBox="0 0 10 10"><path d="M0 5h10M5 0v10" stroke="#222" fill="none"/></svg>
        <span class="zoompct asc">100%</span>
      </div>
    </main>
    <div class="railpane d-flex flex-column">
      <div class="railtop"><i></i></div>
      <div class="railic on"><svg width="16" height="16" viewBox="0 0 16 16" fill="#3e9af7"><rect width="9.500" height="10"/><rect x="11" width="5" height="4.500"/><rect x="11" y="6" width="5" height="4"/><rect y="11.500" width="4" height="4.500"/><rect x="5.500" y="11.500" width="4" height="4.500"/><rect x="11" y="11.500" width="5" height="4.500"/></svg></div>
      <div class="railic"><svg width="16" height="16" viewBox="0 0 16 16"><path d="M.5.500h13v13H.5zM.5 4.500h13M5 .5v13M9.500.5v13M.5 9h13" fill="none" stroke="#666"/><circle cx="11.500" cy="11.500" r="4.500" fill="#555"/><path d="M11.500 10.500v3.500M11.500 8.500v1" stroke="#fff" stroke-width="1.300"/></svg></div>
      <div class="railic"><svg width="16" height="16" viewBox="0 0 16 16"><path d="M2.500 2.500h11v11h-11z" fill="none" stroke="#555" stroke-width="1.400"/><path d="M1 1h3v3H1zM12 1h3v3h-3zM1 12h3v3H1zM12 12h3v3h-3z" fill="#555" opacity=".7"/></svg></div>
      <div class="railic"><svg width="16" height="13" viewBox="0 0 16 13"><rect x="1" y="1" width="14" height="11" fill="none" stroke="#555" stroke-width="1.400"/><path d="M6 5h5L8.500 8z" fill="#555"/></svg></div>
      <div class="railic"><svg width="16" height="13" viewBox="0 0 16 13"><path d="M3 2h-2v9h2" fill="none" stroke="#555"/><rect x="4.500" y="1" width="11" height="4" fill="none" stroke="#555" stroke-width="1.300"/><rect x="4.500" y="8" width="11" height="4" fill="none" stroke="#555" stroke-width="1.300"/></svg></div>
      <div class="railic"><svg width="15" height="15" viewBox="0 0 15 15"><path d="M6 3.500L4 1.500C3 .5 1.500 1 1 2s-.5 2.500.5 3.500l4 4c1 1 2.500 1 3 0M9 11.500l2 2c1 1 2.500.5 3-.5s.5-2.500-.5-3.500l-4-4c-1-1-2.500-1-3 0" fill="none" stroke="#666" stroke-width="1.700"/></svg></div>
    </div>
    <section class="proppane d-flex flex-column">
      <div class="prophead d-flex align-items-center justify-content-between">
        <span>单元格元素</span>
        <svg width="12" height="12" viewBox="0 0 12 12"><path d="M11 1L2 10M2 4v7h7" fill="none" stroke="#3e9af7" stroke-width="1.700"/></svg>
      </div>
      <form class="propform">
        <div class="proprow d-flex align-items-center"><label>单元格</label><input class="form-control" type="text" value="A1"></div>
        <div class="proprow d-flex align-items-center"><label>插入元素</label><div class="selectbox"><span class="val">插入普通文本<span class="asc">(T)</span></span><span class="chev"><svg width="10" height="6"><use href="#s-chev"/></svg></span></div></div>
        <input class="form-control txtfield" type="text" value="地区销售概况">
      </form>
    </section>
  </div>

  <div class="dropdown-menu tpl-menu">
    <div class="dropdown-header">工作簿<span class="rule"></span></div>
    <a class="dropdown-item"><svg width="16" height="16" fill="#444"><use href="#s-db"/></svg><span class="mi-lab">模板数据集<span class="asc">(D)...</span></span></a>
    <a class="dropdown-item active"><svg width="16" height="16" viewBox="0 0 16 16"><circle cx="7.500" cy="7.500" r="7" fill="#555"/><path d="M1 7.500h13M7.500 1c-4 4-4 9 0 13M7.500 1c4 4 4 9 0 13" fill="none" stroke="#e0e0e3"/><circle cx="12" cy="12" r="3.500" fill="#444" stroke="#e0e0e3"/></svg><span class="mi-lab">模板<span class="asc">Web</span>属性<span class="asc">(W)...</span></span></a>
    <a class="dropdown-item"><svg width="16" height="16" viewBox="0 0 16 16"><path d="M2 1h12v13l-3 2H2z" fill="#fff" stroke="#444"/><path d="M6 7h4V4l4 4-4 4V9H6z" fill="#2cb55a"/></svg><span class="mi-lab">模板导出属性<span class="asc">(E)...</span></span></a>
    <a class="dropdown-item"><svg width="16" height="16" viewBox="0 0 16 16"><rect x="1.500" y="1.500" width="13" height="13" fill="none" stroke="#333"/><path d="M5.500 12V4h3c3 0 3 4.500 0 4.500h-3" fill="none" stroke="#333"/></svg><span class="mi-lab">模板参数<span class="asc">(A)...</span></span></a>
    <a class="dropdown-item"><svg width="16" height="16" viewBox="0 0 16 16"><path d="M0 1h4v4H0zM12 1h4v4h-4zM0 11h4v4H0zM12 11h4v4h-4z" fill="#aaa"/><path d="M4 3h8M4 13h8M2 5v6M14 5v6" stroke="#bbb" stroke-dasharray="2 1" fill="none"/><rect x="5" y="6" width="6" height="4" fill="#aaa"/></svg><span class="mi-lab">模板自适应属性<span class="asc">(T)...</span></span></a>
    <a class="dropdown-item"><svg width="16" height="16" viewBox="0 0 16 16"><rect x="2" y="1" width="12" height="14" rx="1.500" fill="#f2f2f4" stroke="#888" stroke-width="1.200"/></svg><span class="mi-lab">移动端属性<span class="asc">(P)...</span></span></a>
    <a class="dropdown-item"><svg width="16" height="16" viewBox="0 0 16 16"><rect x="4" y="1" width="8" height="4" fill="#999"/><rect x="1" y="5" width="14" height="6" rx="1" fill="#888"/><rect x="4" y="10" width="8" height="5" fill="#f2f2f4" stroke="#888"/></svg><span class="mi-lab">打印设置<span class="asc">(P)...</span></span></a>
    <a class="dropdown-item"><svg width="16" height="16" viewBox="0 0 16 16"><circle cx="8" cy="4" r="3" fill="none" stroke="#444" stroke-width="1.400"/><path d="M7 7v3H2.500L1.500 14h13l-1-4H9V7" fill="none" stroke="#444" stroke-width="1.400"/></svg><span class="mi-lab">水印<span class="asc">(M)...</span></span></a>
    <div class="dropdown-header">当前<span class="asc">Sheet</span><span class="rule"></span></div>
    <a class="dropdown-item"><svg width="16" height="16"><use href="#s-page"/></svg><span class="mi-lab">页面设置<span class="asc">(U)...</span></span></a>
    <a class="dropdown-item"><svg width="16" height="16" viewBox="0 0 16 16"><rect x="1.500" y="1.500" width="13" height="13" fill="none" stroke="#555"/><path d="M4 5h4M6 5v5" stroke="#555" fill="none"/></svg><span class="mi-lab">报表页眉<span class="asc">(H)...</span></span></a>
    <a class="dropdown-item"><svg width="16" height="16" viewBox="0 0 16 16"><rect x="1.500" y="1.500" width="13" height="13" fill="none" stroke="#555"/><path d="M4 11.500h8M12 5v6" stroke="#555" fill="none"/></svg><span class="mi-lab">报表页脚<span class="asc">(F)...</span></span></a>
    <a class="dropdown-item"><svg width="16" height="16" viewBox="0 0 16 16"><rect x=".5" y="1" width="15" height="14" fill="#fff" stroke="#555"/><path d="M1 14l5-6 3 3 2-2 4 5z" fill="#2cb55a"/><circle cx="4.500" cy="4.500" r="2" fill="#e33"/></svg><span class="mi-lab">纸张背景<span class="asc">(B)...</span></span></a>
    <div class="dropdown-divider"></div>
    <a class="dropdown-item"><svg width="16" height="16" viewBox="0 0 16 16"><rect x="1.500" y="2.500" width="13" height="11" fill="none" stroke="#555"/><path d="M3 5.500h10M3 8h5M3 10.500h5" stroke="#555" fill="none"/><circle cx="12" cy="11" r="3" fill="#555"/></svg><span class="mi-lab">报表填报属性<span class="asc">(R)...</span></span></a>
    <a class="dropdown-item"><svg width="16" height="16" viewBox="0 0 16 16"><path d="M1 3.500h6M9 3.500h6M1 6.500h6M9 6.500h6M1 9.500h6M9 9.500h6M1 12.500h6M9 12.500h6" stroke="#444" stroke-width="1.500" fill="none"/></svg><span class="mi-lab">报表分栏<span class="asc">(C)...</span></span></a>
    <a class="dropdown-item"><svg width="16" height="16"><use href="#s-page"/></svg><span class="mi-lab">重复与冻结设置<span class="asc">(G)...</span></span></a>
    <a class="dropdown-item"><svg width="16" height="16" viewBox="0 0 16 16"><rect x="1.500" y="1.500" width="13" height="13" fill="none" stroke="#555"/><path d="M3 5h10" stroke="#555"/><circle cx="6" cy="9" r="2" fill="none" stroke="#555"/><circle cx="11" cy="11" r="2" fill="#555"/></svg><span class="mi-lab">报表引擎属性<span class="asc">(E)...</span></span></a>
    <div class="dropdown-header">权限编辑<span class="rule"></span></div>
    <a class="dropdown-item"><svg width="16" height="16" viewBox="0 0 16 16"><rect x="1" y="1" width="14" height="14" fill="none" stroke="#444" stroke-width="1.200"/><path d="M1 5.500h14M5.500 1v4.500M10.500 1v4.500" stroke="#444" fill="none"/><circle cx="8" cy="7.500" r="2.800" fill="#222"/><path d="M3 15c0-4 2-5 5-5s5 1 5 5z" fill="#222"/></svg><span class="mi-lab">进入权限编辑</span></a>
  </div>

  <div class="markbox mb1"></div>
  <div class="markbox mb2"></div>
  <div class="markdot md1">1</div>
  <div class="markdot md2">2</div>
</div>
</body>
</html>
